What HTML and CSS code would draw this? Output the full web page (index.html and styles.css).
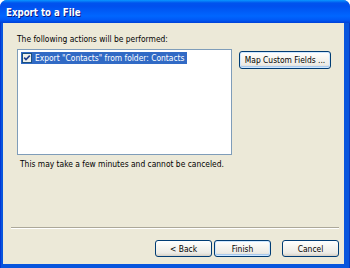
FILE: index.html
```html
<!DOCTYPE html>
<html lang="en">
<head>
    <meta charset="UTF-8">
    <title>Export to a File</title>
    <link rel="stylesheet" href="styles.css">
</head>
<body>
    <div class="window">
        <div class="titlebar">
            <span class="title">Export to a File</span>
        </div>
        <div class="frame">
            <p class="prompt">The following actions will be performed:</p>
            <div class="content">
                <div class="listbox">
                    <div class="item selected">
                        <svg class="check" width="10" height="10" viewBox="0 0 10 10">
                            <rect x="0.5" y="0.5" width="9" height="9" fill="#f0f0ea" stroke="#1c5180"/>
                            <path d="M2.2 4.6 L4 6.6 L7.8 2.6" fill="none" stroke="#1f3f8f" stroke-width="1.6"/>
                        </svg>
                        <span class="item-text">Export "Contacts" from folder: Contacts</span>
                    </div>
                </div>
                <button class="btn map-btn">Map Custom Fields ...</button>
            </div>
            <p class="note">This may take a few minutes and cannot be canceled.</p>
            <div class="footer">
                <div class="separator"></div>
                <div class="buttons">
                    <button class="btn">&lt; Back</button>
                    <button class="btn default">Finish</button>
                    <button class="btn cancel">Cancel</button>
                </div>
            </div>
        </div>
    </div>
</body>
</html>
```

FILE: styles.css
```css
html, body {
    margin: 0;
    padding: 0;
}
body {
    width: 350px;
    height: 268px;
    overflow: hidden;
    background: #ffffff;
    font-family: "DejaVu Sans Condensed", "DejaVu Sans", sans-serif;
    font-stretch: condensed;
    font-size: 8.4px;
    color: #000;
}
.window {
    height: 268px;
    display: flex;
    flex-direction: column;
    background: linear-gradient(to right, #0019cf 0, #0855dd 1px, #0855dd 349px, #001ea0 350px);
    border-radius: 7px 7px 0 0;
}
.titlebar {
    height: 23px;
    display: flex;
    align-items: center;
    padding-left: 6px;
    border-radius: 7px 7px 0 0;
    background: linear-gradient(to bottom, #0997ff 0, #0053ee 3px, #0050ee 6px, #0066ff 16px, #0058f6 20px, #0041d6 23px);
}
.title {
    color: #fff;
    font-weight: bold;
    font-size: 9.6px;
    text-shadow: 1px 1px 0 #0a1883;
    padding-top: 1px;
}
.frame {
    flex: 1;
    display: flex;
    flex-direction: column;
    margin: 0 6px 4px 3px;
    padding: 11px 0 0 14px;
    background: #ece9d8;
}
.prompt {
    margin: 0;
    height: 11px;
    line-height: 11px;
}
.content {
    display: flex;
    gap: 7px;
    margin-top: 4px;
}
.listbox {
    width: 213px;
    height: 104px;
    background: #fff;
    border: 1px solid #7f9db9;
    padding: 2px 0 0 3px;
    box-sizing: content-box;
}
.listbox {
    width: 210px;
    height: 102px;
}
.item {
    display: inline-flex;
    align-items: center;
    height: 12px;
    padding: 0 3px 0 1px;
    gap: 3px;
}
.item.selected {
    background: #316ac5;
    color: #fff;
}
.check {
    display: block;
}
.item-text {
    line-height: 12px;
    white-space: nowrap;
}
.btn {
    font-family: inherit;
    font-stretch: condensed;
    font-size: 8.4px;
    color: #000;
    height: 17px;
    padding: 0;
    border: 1px solid #003c74;
    border-radius: 3px;
    background: linear-gradient(to bottom, #ffffff 0, #f6f5f0 40%, #ecebe6 80%, #d6d0c5 100%);
    cursor: pointer;
}
.map-btn {
    width: 92px;
    height: 18px;
    margin-top: 2px;
    box-shadow: inset 0 0 0 1px #cee7ff, inset 0 -1px 0 1px #a9c9ec;
}
.note {
    margin: 4px 0 0 3px;
    height: 11px;
    line-height: 11px;
}
.footer {
    margin-top: auto;
    margin-left: -6px;
    padding: 0 5px 7px 0;
}
.separator {
    height: 1px;
    background: #aca899;
    border-bottom: 1px solid #fff;
}
.buttons {
    display: flex;
    justify-content: flex-end;
    gap: 2px;
    margin-top: 11px;
}
.buttons .btn {
    width: 57px;
}
.btn.default {
    box-shadow: inset 0 0 0 1px #cee7ff, inset 0 -1px 0 1px #a9c9ec;
}
.btn.cancel {
    margin-left: 9px;
}
```
